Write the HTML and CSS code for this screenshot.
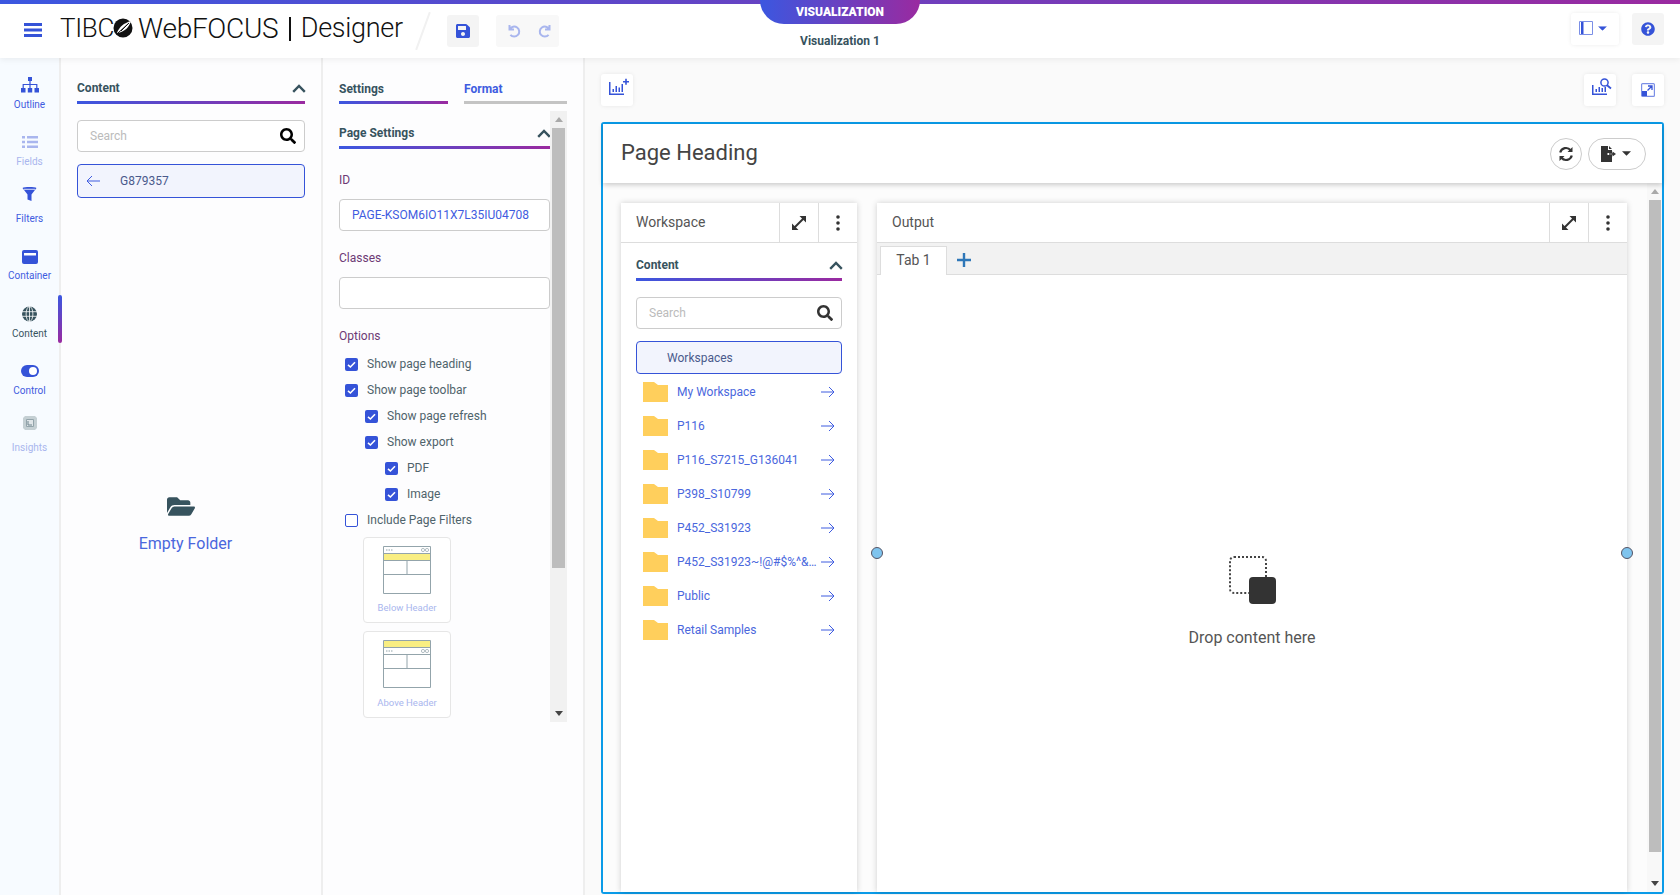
FILE: index.html
```html
<!DOCTYPE html>
<html lang="en">
<head>
  <meta charset="UTF-8" />
  <title>WebFOCUS Designer</title>
  <link rel="stylesheet" href="styles.css">
</head>
<body>
  <svg class="defs" width="0" height="0">
    <symbol id="i-search" viewBox="0 0 512 512"><path d="M505 442.7L405.3 343c-4.5-4.5-10.6-7-17-7H372c27.6-35.3 44-79.7 44-128C416 93.1 322.9 0 208 0S0 93.1 0 208s93.1 208 208 208c48.3 0 92.7-16.4 128-44v16.3c0 6.4 2.5 12.5 7 17l99.7 99.7c9.4 9.4 24.6 9.4 33.9 0l28.3-28.3c9.4-9.4 9.4-24.6.1-34zM208 336c-70.7 0-128-57.2-128-128 0-70.7 57.2-128 128-128 70.7 0 128 57.2 128 128 0 70.7-57.2 128-128 128z"/></symbol>
    <symbol id="i-chevron" viewBox="0 0 14 9"><path d="M1.200 7.800 7 2l5.800 5.800" fill="none" stroke="currentColor" stroke-width="2.400"/></symbol>
    <symbol id="i-folder" viewBox="0 0 25 20"><path d="M0 0h11l4 3h10v17H0z" fill="#ffcf5c"/></symbol>
    <symbol id="i-arrow" viewBox="0 0 14 12"><path d="M0 6h13M8 1l5 5-5 5" fill="none" stroke="currentColor" stroke-width="1"/></symbol>
    <symbol id="i-check" viewBox="0 0 13 13"><path d="M3 6.800 5.400 9 10 4.200" fill="none" stroke="#fff" stroke-width="1.600"/></symbol>
    <symbol id="i-expand" viewBox="0 0 16 16"><path d="M3 13 13 3" stroke="currentColor" stroke-width="2" fill="none"/><path d="M8.500 1H15v6.500zM1 8.500 7.500 15H1z" fill="currentColor"/></symbol>
    <symbol id="i-dots" viewBox="0 0 4 16"><circle cx="2" cy="2" r="1.800"/><circle cx="2" cy="8" r="1.800"/><circle cx="2" cy="14" r="1.800"/></symbol>
    <symbol id="i-caret" viewBox="0 0 10 5"><path d="M0 0h10L5 5z"/></symbol>
  </svg>

  <header class="topbar">
    <div class="top-left">
      <svg class="burger" viewBox="0 0 18 14" width="18" height="14"><path d="M0 0h18v3H0zM0 5.500h18v3H0zM0 11h18v3H0z"/></svg>
      <div class="logo">
        <span>TIBC</span>
        <svg class="logo-ball" viewBox="0 0 20 20" width="20" height="20"><circle cx="10" cy="10" r="9.500" fill="#111"/><path d="M4 15C6 9 11 5 18 3c-2 6-6 11-14 12z" fill="#fff"/><path d="M5 15 16 5M8 13l7-7" stroke="#111" stroke-width="1"/></svg>
        <span class="logo-wf">WebFOCUS</span>
        <i class="logo-bar"></i>
        <span class="logo-des">Designer</span>
      </div>
      <i class="slash"></i>
      <button class="tool tool-grey">
        <svg viewBox="0 0 448 512" width="14" height="16" fill="#3553d8"><path d="M433.941 129.941l-83.882-83.882A48 48 0 0 0 316.118 32H48C21.49 32 0 53.49 0 80v352c0 26.51 21.49 48 48 48h352c26.51 0 48-21.49 48-48V163.882a48 48 0 0 0-14.059-33.941zM224 416c-35.346 0-64-28.654-64-64 0-35.346 28.654-64 64-64s64 28.654 64 64c0 35.346-28.654 64-64 64zm96-304.52V212c0 6.627-5.373 12-12 12H76c-6.627 0-12-5.373-12-12V108c0-6.627 5.373-12 12-12h228.52c3.183 0 6.235 1.264 8.485 3.515l3.48 3.48A11.996 11.996 0 0 1 320 111.48z"/></svg>
      </button>
      <div class="undo-group">
        <svg viewBox="0 0 14 14" width="14" height="14"><path d="M2.500 1v4.500H7M2.800 5.200a5 5 0 1 1 .6 5.600" fill="none" stroke="#a9b6ee" stroke-width="2"/></svg>
        <svg viewBox="0 0 14 14" width="14" height="14"><path d="M11.500 1v4.500H7M11.200 5.200a5 5 0 1 0-.6 5.600" fill="none" stroke="#a9b6ee" stroke-width="2"/></svg>
      </div>
    </div>
    <div class="top-center">
      <div class="mode-tab">VISUALIZATION</div>
      <div class="doc-name">Visualization 1</div>
    </div>
    <div class="top-right">
      <button class="tool tool-wide">
        <svg viewBox="0 0 14 14" width="14" height="14"><path d="M.5.500h13v13H.5z" fill="none" stroke="#7b8fe6"/><path d="M2 1h2.500v12H2z" fill="#3553d8"/></svg>
        <svg viewBox="0 0 10 5" width="9" height="5" fill="#3553d8"><use href="#i-caret"/></svg>
      </button>
      <button class="tool tool-grey">
        <svg viewBox="0 0 512 512" width="14" height="14" fill="#3553d8"><path d="M504 256c0 136.997-111.043 248-248 248S8 392.997 8 256C8 119.083 119.043 8 256 8s248 111.083 248 248zM262.655 90c-54.497 0-89.255 22.957-116.549 63.758-3.536 5.286-2.353 12.415 2.715 16.258l34.699 26.31c5.205 3.947 12.621 3.008 16.665-2.122 17.864-22.658 30.113-35.797 57.303-35.797 20.429 0 45.698 13.148 45.698 32.958 0 14.976-12.363 22.667-32.534 33.976C247.128 238.528 216 254.941 216 296v4c0 6.627 5.373 12 12 12h56c6.627 0 12-5.373 12-12v-1.333c0-28.462 83.186-29.647 83.186-106.667 0-58.002-60.165-102-116.531-102zM256 338c-25.365 0-46 20.635-46 46 0 25.364 20.635 46 46 46s46-20.636 46-46c0-25.365-20.635-46-46-46z"/></svg>
      </button>
    </div>
  </header>

  <div class="app">
    <nav class="rail">
      <a class="rail-item">
        <svg viewBox="0 0 18 16" width="18" height="16" fill="#3553d8"><path d="M7 0h4v4H7zM0 11h4.500v4.500H0zM6.800 11h4.400v4.500H6.800zM13.500 11H18v4.500h-4.500z"/><path d="M2.200 11V7.500h13.600V11M9 4v7" fill="none" stroke="#3553d8" stroke-width="1.200"/></svg>
        <span>Outline</span>
      </a>
      <a class="rail-item is-off">
        <svg viewBox="0 0 16 14" width="16" height="14" fill="#a9b6ee"><path d="M0 1h3v2.400H0zM5 1h11v2.400H5zM0 5.800h3v2.400H0zM5 5.800h11v2.400H5zM0 10.600h3V13H0zM5 10.600h11V13H5z"/></svg>
        <span>Fields</span>
      </a>
      <a class="rail-item icon-high">
        <svg viewBox="0 0 15 15" width="15" height="15" fill="#3553d8"><path d="M.5 1.500C2 .3 13 .3 14.500 1.500L9.500 8v6.500l-4-1.500V8z"/><path d="M2 2.800h11" stroke="#fff" stroke-width=".8"/></svg>
        <span>Filters</span>
      </a>
      <a class="rail-item">
        <svg viewBox="0 0 16 14" width="16" height="14"><rect width="16" height="14" rx="2" fill="#3553d8"/><path d="M2 3h12v2.500H2z" fill="#fff"/></svg>
        <span>Container</span>
      </a>
      <a class="rail-item is-on">
        <svg viewBox="0 0 15 15" width="15" height="15"><circle cx="7.500" cy="7.500" r="7.500" fill="#37535e"/><path d="M0 5.200h15M0 9.800h15M7.500 0v15" stroke="#fff" stroke-width=".8"/><ellipse cx="7.500" cy="7.500" rx="3.400" ry="7.500" fill="none" stroke="#fff" stroke-width=".8"/></svg>
        <span>Content</span>
      </a>
      <a class="rail-item">
        <svg viewBox="0 0 18 12" width="18" height="12"><rect width="18" height="12" rx="6" fill="#3553d8"/><circle cx="12" cy="6" r="4" fill="#fff"/></svg>
        <span>Control</span>
      </a>
      <a class="rail-item is-off icon-high">
        <svg viewBox="0 0 14 14" width="14" height="14"><path d="M2 0h10l2 2v10l-2 2H2l-2-2V2z" fill="#c4cfd3"/><path d="M3.500 3.500h7v7h-7z" fill="#dfe5e8" stroke="#93a4ab"/><path d="M5 5v4h4" fill="none" stroke="#6f858e"/></svg>
        <span>Insights</span>
      </a>
    </nav>

    <section class="panel panel-content">
      <div class="sect-head"><b>Content</b><svg class="chev" width="14" height="9"><use href="#i-chevron"/></svg></div>
      <div class="search">
        <span>Search</span>
        <svg width="16" height="16"><use href="#i-search"/></svg>
      </div>
      <div class="selected sel-back">
        <svg class="back" width="14" height="12"><use href="#i-arrow"/></svg>
        <span>G879357</span>
      </div>
      <div class="empty">
        <svg viewBox="0 0 576 512" width="28" height="25" fill="#37535e"><path d="M572.694 292.093L500.27 416.248A63.997 63.997 0 0 1 444.989 448H45.025c-18.523 0-30.064-20.093-20.731-36.093l72.424-124.155A64 64 0 0 1 152 256h399.964c18.523 0 30.064 20.093 20.73 36.093zM152 224h328v-48c0-26.51-21.49-48-48-48H272l-64-64H48C21.49 64 0 85.49 0 112v278.046l69.077-118.418C86.214 242.25 117.989 224 152 224z"/></svg>
        <p>Empty Folder</p>
      </div>
    </section>

    <section class="panel panel-settings">
      <div class="tabs">
        <div class="tab tab-on">Settings</div>
        <div class="tab tab-off">Format</div>
      </div>
      <div class="scroller">
        <div class="scroll-body">
          <div class="sect-head"><b>Page Settings</b><svg class="chev" width="14" height="9"><use href="#i-chevron"/></svg></div>
          <label class="fld-label lbl-first">ID</label>
          <div class="input input-val">PAGE-KSOM6IO11X7L35IU04708</div>
          <label class="fld-label">Classes</label>
          <div class="input"></div>
          <label class="fld-label">Options</label>
          <ul class="checks">
            <li><i class="box on"><svg width="13" height="13"><use href="#i-check"/></svg></i>Show page heading</li>
            <li><i class="box on"><svg width="13" height="13"><use href="#i-check"/></svg></i>Show page toolbar</li>
            <li class="lvl2"><i class="box on"><svg width="13" height="13"><use href="#i-check"/></svg></i>Show page refresh</li>
            <li class="lvl2"><i class="box on"><svg width="13" height="13"><use href="#i-check"/></svg></i>Show export</li>
            <li class="lvl3"><i class="box on"><svg width="13" height="13"><use href="#i-check"/></svg></i>PDF</li>
            <li class="lvl3"><i class="box on"><svg width="13" height="13"><use href="#i-check"/></svg></i>Image</li>
            <li><i class="box"></i>Include Page Filters</li>
          </ul>
          <div class="thumb">
            <svg viewBox="0 0 48 48" width="48" height="48">
              <path d="M.5.500h47v47H.5z" fill="#fff" stroke="#93a4ab"/>
              <path d="M1 7.500h46v7H1z" fill="#f9ee82"/>
              <path d="M1 7.500h46M1 14.500h46M24 14.500v14M1 28.500h46" stroke="#93a4ab" fill="none"/>
              <path d="M3 4h1.500M5.500 4H7M8 4h1.500" stroke="#93a4ab"/>
              <circle cx="40" cy="4" r="1.600" fill="none" stroke="#93a4ab" stroke-width=".7"/><circle cx="44" cy="4" r="1.600" fill="none" stroke="#93a4ab" stroke-width=".7"/>
            </svg>
            <span>Below Header</span>
          </div>
          <div class="thumb thumb-last">
            <svg viewBox="0 0 48 48" width="48" height="48">
              <path d="M.5.500h47v47H.5z" fill="#fff" stroke="#93a4ab"/>
              <path d="M1 1h46v6.500H1z" fill="#f9ee82"/>
              <path d="M1 7.500h46M1 14.500h46M24 14.500v14M1 28.500h46" stroke="#93a4ab" fill="none"/>
              <path d="M3 11h1.500M5.500 11H7M8 11h1.500" stroke="#93a4ab"/>
              <circle cx="40" cy="11" r="1.600" fill="none" stroke="#93a4ab" stroke-width=".7"/><circle cx="44" cy="11" r="1.600" fill="none" stroke="#93a4ab" stroke-width=".7"/>
            </svg>
            <span>Above Header</span>
          </div>
        </div>
        <div class="sbar sbar-side">
          <i class="sb-up"></i>
          <i class="sb-thumb"></i>
          <i class="sb-down"></i>
        </div>
      </div>
    </section>

    <main class="stage">
      <div class="stage-tools">
        <button class="tool tool-white tool-lift">
          <svg viewBox="0 0 20 18" width="20" height="18" fill="#3553d8"><path d="M0 4h1.500v11.500H15V17H0z"/><path d="M3.500 11H5v3H3.500zM6.500 8H8v6H6.500zM9.500 9.500H11V14H9.500zM12.500 6H14v8h-1.500z"/><path d="M14 3h6v1.600h-6zM16.200.800h1.600v6h-1.600z"/></svg>
        </button>
        <div class="tools-right">
          <button class="tool tool-white tool-lift">
            <svg viewBox="0 0 20 18" width="20" height="18" fill="#3553d8"><path d="M0 7h1.500v8.500H15V17H0z"/><path d="M3.500 11H5v3H3.500zM6.500 9H8v5H6.500zM9.500 10H11v4H9.500zM12.500 9H14v5h-1.500z"/><circle cx="12.500" cy="4.500" r="3.600" fill="none" stroke="#3553d8" stroke-width="1.500"/><path d="m15 7.200 4 3.300" stroke="#3553d8" stroke-width="1.800"/></svg>
          </button>
          <button class="tool tool-white">
            <svg viewBox="0 0 14 14" width="14" height="14"><rect x=".6" y=".6" width="12.800" height="12.800" rx="1" fill="none" stroke="#7b8fe6" stroke-width="1.200"/><path d="M1 8h5v5H1z" fill="#3553d8"/><path d="m6.500 7.500 4-4M7 3h4v4" fill="none" stroke="#3553d8" stroke-width="1.300"/></svg>
          </button>
        </div>
      </div>

      <div class="canvas">
        <div class="page-head">
          <h1>Page Heading</h1>
          <div class="page-actions">
            <button class="round">
              <svg viewBox="0 0 16 16" width="16" height="16"><path d="M2.200 6.500A6 6 0 0 1 12.600 4.200M13.800 9.500A6 6 0 0 1 3.400 11.800" fill="none" stroke="#333" stroke-width="2.200"/><path d="M14.500 1v5h-5zM1.500 15v-5h5z" fill="#333"/></svg>
            </button>
            <button class="round pill">
              <svg viewBox="0 0 16 16" width="16" height="16" fill="#333"><path d="M1 0h7v4h4v3H7.500v2H12v7H1zM9 0l3 3H9z"/><path d="M9 7.200h3.500V5.500L16 8l-3.500 2.500V8.800H9z"/></svg>
              <svg width="9" height="5" fill="#333"><use href="#i-caret"/></svg>
            </button>
          </div>
        </div>
        <div class="page-body">
          <article class="card card-ws">
            <div class="card-head">
              <span class="card-title">Workspace</span>
              <button class="card-btn"><svg width="16" height="16"><use href="#i-expand"/></svg></button>
              <button class="card-btn"><svg width="4" height="16" fill="#333"><use href="#i-dots"/></svg></button>
            </div>
            <div class="ws-body">
              <div class="sect-head"><b>Content</b><svg class="chev" width="14" height="9"><use href="#i-chevron"/></svg></div>
              <div class="search">
                <span>Search</span>
                <svg width="16" height="16" fill="#333"><use href="#i-search"/></svg>
              </div>
              <div class="selected sel-ws"><span>Workspaces</span></div>
              <ul class="files">
                <li><svg width="25" height="20"><use href="#i-folder"/></svg><span>My Workspace</span><svg class="go" width="14" height="12"><use href="#i-arrow"/></svg></li>
                <li><svg width="25" height="20"><use href="#i-folder"/></svg><span>P116</span><svg class="go" width="14" height="12"><use href="#i-arrow"/></svg></li>
                <li><svg width="25" height="20"><use href="#i-folder"/></svg><span>P116_S7215_G136041</span><svg class="go" width="14" height="12"><use href="#i-arrow"/></svg></li>
                <li><svg width="25" height="20"><use href="#i-folder"/></svg><span>P398_S10799</span><svg class="go" width="14" height="12"><use href="#i-arrow"/></svg></li>
                <li><svg width="25" height="20"><use href="#i-folder"/></svg><span>P452_S31923</span><svg class="go" width="14" height="12"><use href="#i-arrow"/></svg></li>
                <li><svg width="25" height="20"><use href="#i-folder"/></svg><span>P452_S31923~!@#$%^&amp;…</span><svg class="go" width="14" height="12"><use href="#i-arrow"/></svg></li>
                <li><svg width="25" height="20"><use href="#i-folder"/></svg><span>Public</span><svg class="go" width="14" height="12"><use href="#i-arrow"/></svg></li>
                <li><svg width="25" height="20"><use href="#i-folder"/></svg><span>Retail Samples</span><svg class="go" width="14" height="12"><use href="#i-arrow"/></svg></li>
              </ul>
            </div>
          </article>

          <article class="card card-out">
            <i class="handle handle-l"></i>
            <i class="handle handle-r"></i>
            <div class="card-head">
              <span class="card-title">Output</span>
              <button class="card-btn"><svg width="16" height="16"><use href="#i-expand"/></svg></button>
              <button class="card-btn"><svg width="4" height="16" fill="#333"><use href="#i-dots"/></svg></button>
            </div>
            <div class="out-tabs">
              <div class="out-tab">Tab 1</div>
              <svg viewBox="0 0 14 14" width="14" height="14"><path d="M7 0v14M0 7h14" stroke="#2f77b8" stroke-width="2.400"/></svg>
            </div>
            <div class="drop">
              <div class="drop-icon"><i class="drop-dash"></i><i class="drop-solid"></i></div>
              <p>Drop content here</p>
            </div>
          </article>

          <div class="sbar sbar-page">
            <i class="sb-up"></i>
            <i class="sb-thumb"></i>
            <i class="sb-down"></i>
          </div>
        </div>
      </div>
    </main>
  </div>
</body>
</html>
```

FILE: styles.css
```css
* {
  box-sizing: border-box;
}

html, body {
  margin: 0;
  height: 895px;
  overflow: hidden;
}

body {
  display: flex;
  flex-direction: column;
  font-family: Roboto, "Liberation Sans", sans-serif;
  font-size: 12px;
  color: #37535e;
  background: #fff;
}

.defs {
  position: absolute;
}

button {
  padding: 0;
  border: none;
  background: none;
  font: inherit;
}

ul {
  list-style: none;
  margin: 0;
  padding: 0;
}

/* top bar */
.topbar {
  position: relative;
  z-index: 3;
  flex: none;
  height: 58px;
  display: grid;
  grid-template-columns: 1fr auto 1fr;
  border-top: 4px solid;
  border-image: linear-gradient(90deg, #3b57e0, #9a2aa0) 1;
  background: #fff;
  box-shadow: 0 2px 6px rgba(0, 0, 0, .06);
}

.top-left {
  display: flex;
  align-items: center;
  padding-left: 24px;
  padding-bottom: 5px;
}

.burger {
  fill: #3553d8;
  margin-top: 2px;
}

.logo {
  display: flex;
  align-items: center;
  margin: -1px 0 0 18px;
  font-size: 26px;
  font-weight: 300;
  color: #111;
  letter-spacing: -.3px;
}

.logo-ball {
  margin: 0 5px 0 -1px;
}

.logo-wf {
  font-size: 28px;
}

.logo-des {
  font-size: 27px;
}

.logo-bar {
  width: 1.5px;
  height: 24px;
  margin: 2px 10px 0 11px;
  background: #111;
}

.slash {
  width: 2px;
  height: 40px;
  margin: 4px 0 0 19px;
  background: #f1f1f1;
  transform: rotate(20deg);
}

.tool {
  display: flex;
  align-items: center;
  justify-content: center;
  width: 32px;
  height: 32px;
  border-radius: 3px;
}

.tool-grey {
  background: #f4f4f4;
}

.top-left .tool {
  margin: 5px 0 0 23px;
}

.undo-group {
  display: flex;
  align-items: center;
  justify-content: space-between;
  width: 63px;
  height: 32px;
  margin: 5px 0 0 17px;
  padding: 0 7px 0 11px;
  border-radius: 3px;
  background: #f8f8f8;
}

.top-center {
  width: 160px;
  margin-top: -4px;
  text-align: center;
}

.mode-tab {
  height: 24px;
  line-height: 24px;
  border-radius: 0 0 24px 24px;
  background: linear-gradient(90deg, #3b57e0, #9a2aa0);
  color: #fff;
  font-weight: 900;
  font-size: 12px;
}

.doc-name {
  margin-top: 9px;
  line-height: 16px;
  font-weight: 700;
}

.top-right {
  display: flex;
  justify-content: flex-end;
  gap: 13px;
  padding: 9px 16px 0 0;
}

.tool-wide {
  width: 48px;
  gap: 5px;
  padding: 0 4px 2px 0;
  box-shadow: 0 0 4px rgba(0, 0, 0, .08);
}

.tool-white {
  background: #fff;
  box-shadow: 0 0 4px rgba(0, 0, 0, .08);
}

.tool-lift svg {
  margin: 0 0 7px 3px;
}

/* app columns */
.app {
  flex: 1;
  min-height: 0;
  display: flex;
}

.rail {
  flex: none;
  width: 61px;
  padding-top: 16px;
  border-right: 2px solid #eee;
  background: #f7fbff;
}

.rail-item {
  position: relative;
  display: flex;
  flex-direction: column;
  align-items: center;
  height: 57.3px;
  font-size: 10px;
  color: #3f5ce0;
}

.rail-item svg {
  flex: none;
  margin-top: 2px;
  height: 18px;
}

.rail-item span {
  margin-top: 4.5px;
  line-height: 12px;
}

.icon-high svg {
  margin-top: -4px;
  margin-bottom: 6px;
}

.is-off {
  color: #a9b6ee;
}

.is-on {
  color: #37535e;
}

.is-on::after {
  content: "";
  position: absolute;
  right: -3px;
  top: -8px;
  width: 4px;
  height: 48px;
  border-radius: 2px;
  background: linear-gradient(180deg, #3b57e0, #9a2aa0);
}

.panel {
  flex: none;
  border-right: 2px solid #eee;
  background: #fdfdfe;
}

.panel-content {
  width: 262px;
  padding: 20px 16px 0 16px;
}

.panel-settings {
  width: 262px;
  padding: 22px 15px 0 16px;
}

.sect-head {
  display: flex;
  align-items: center;
  justify-content: space-between;
  height: 26px;
  padding-bottom: 6px;
  background: linear-gradient(90deg, #3b57e0, #9a2aa0) bottom / 100% 3px no-repeat;
  color: #37535e;
}

.chev {
  color: #37535e;
  margin-right: -1px;
}

.search {
  display: flex;
  align-items: center;
  justify-content: space-between;
  height: 32px;
  margin-top: 16px;
  padding: 0 8px 0 12px;
  border: 1px solid #ccc;
  border-radius: 4px;
  background: #fff;
  color: #bbb;
}

.selected {
  display: flex;
  align-items: center;
  margin-top: 12px;
  border: 1px solid #3553d8;
  border-radius: 4px;
  background: #f2f4fd;
  color: #4a5a8c;
}

.sel-back {
  height: 34px;
  padding-left: 8px;
}

.back {
  color: #3f5ce0;
  transform: scaleX(-1);
  margin-right: 20px;
}

.empty {
  margin-top: 296px;
  padding-right: 11px;
  text-align: center;
}

.empty svg {
  margin-right: 10px;
}

.empty p {
  margin: 12px 0 0;
  font-size: 16px;
  line-height: 20px;
  color: #4a67dd;
}

/* settings column */
.tabs {
  display: flex;
  gap: 16px;
}

.tab {
  height: 24px;
  padding-top: 2px;
  font-weight: 700;
  background: linear-gradient(90deg, #3b57e0, #9a2aa0) bottom / 100% 3px no-repeat;
}

.tab-on {
  width: 109px;
}

.tab-off {
  width: 103px;
  color: #3f5ce0;
  background: linear-gradient(#c4c4c4, #c4c4c4) bottom / 100% 3px no-repeat;
}

.scroller {
  display: flex;
  height: 611px;
  margin-top: 7px;
}

.scroll-body {
  width: 211px;
  padding-top: 12px;
  overflow: hidden;
}

.fld-label {
  display: block;
  margin-top: 19px;
  line-height: 16px;
  color: #6d3a75;
}

.lbl-first {
  margin-top: 23px;
}

.input {
  height: 32px;
  margin-top: 11px;
  padding-left: 12px;
  line-height: 30px;
  border: 1px solid #ccc;
  border-radius: 4px;
  background: #fff;
}

.input-val {
  color: #3f5ce0;
}

.checks {
  margin-top: 7px;
}

.checks li {
  display: flex;
  align-items: center;
  gap: 9px;
  height: 26px;
  padding-left: 6px;
  color: #4f636b;
}

.checks .lvl2 {
  padding-left: 26px;
}

.checks .lvl3 {
  padding-left: 46px;
}

.box {
  flex: none;
  width: 13px;
  height: 13px;
  border: 1px solid #3553d8;
  border-radius: 2px;
  background: #fff;
}

.box.on {
  border: none;
  background: #3553d8;
}

.box svg {
  display: block;
}

.thumb {
  display: flex;
  flex-direction: column;
  align-items: center;
  width: 88px;
  height: 86px;
  margin: 8px 0 0 24px;
  padding-top: 8px;
  border: 1px solid #e6e6e6;
  border-radius: 4px;
  background: #fff;
  font-size: 9.5px;
  color: #a9b6ee;
}

.checks + .thumb {
  margin-top: 4px;
}

.thumb span {
  margin-top: 8px;
}

.thumb-last {
  height: 87px;
}

.thumb-last span {
  margin-top: 9px;
}

.sbar {
  position: relative;
  flex: none;
  display: flex;
  flex-direction: column;
  align-items: center;
  background: #f1f1f1;
}

.sbar-side {
  width: 17px;
  height: 100%;
  padding-top: 17px;
}

.sb-thumb {
  width: 13px;
  height: 440px;
  background: #bdbdbd;
}

.sb-up, .sb-down {
  position: absolute;
  left: 50%;
  margin-left: -4px;
  border-left: 4px solid transparent;
  border-right: 4px solid transparent;
}

.sb-up {
  top: 6px;
  border-bottom: 5px solid #a9a9a9;
}

.sb-down {
  bottom: 6px;
  border-top: 5px solid #444;
}

/* stage */
.stage {
  flex: 1;
  min-width: 0;
  display: flex;
  flex-direction: column;
  padding: 16px 16px 1px 16px;
  background: #fafafa;
}

.stage-tools {
  flex: none;
  display: flex;
  justify-content: space-between;
}

.tools-right {
  display: flex;
  gap: 16px;
}

.canvas {
  flex: 1;
  min-height: 0;
  display: flex;
  flex-direction: column;
  margin-top: 16px;
  border: 2px solid #0a9be8;
  border-radius: 3px;
  background: #fff;
}

.page-head {
  position: relative;
  z-index: 1;
  flex: none;
  display: flex;
  align-items: center;
  justify-content: space-between;
  height: 59px;
  padding: 0 16px 0 18px;
  background: #fff;
  box-shadow: 0 2px 5px rgba(0, 0, 0, .2);
}

.page-head h1 {
  margin: -2px 0 0;
  font-size: 22px;
  font-weight: 400;
  color: #444;
}

.page-actions {
  display: flex;
  gap: 6px;
}

.round {
  display: flex;
  align-items: center;
  justify-content: center;
  width: 32px;
  height: 32px;
  border: 1px solid #ccc;
  border-radius: 16px;
  background: #fff;
}

.pill {
  width: 58px;
  gap: 6px;
  padding-right: 4px;
}

.page-body {
  flex: 1;
  min-height: 0;
  display: flex;
  padding: 20px 0 0 18px;
  background: #fcfcfc;
}

.card {
  position: relative;
  display: flex;
  flex-direction: column;
  background: #fff;
  box-shadow: 0 0 6px rgba(0, 0, 0, .18);
}

.card-ws {
  width: 236px;
  margin-right: 20px;
}

.card-out {
  width: 750px;
  margin-right: 20px;
}

.card-head {
  flex: none;
  display: flex;
  align-items: center;
  height: 40px;
  border-bottom: 1px solid #ddd;
}

.card-title {
  flex: 1;
  margin-top: -2px;
  padding-left: 15px;
  font-size: 14px;
  color: #555;
}

.card-btn {
  display: flex;
  align-items: center;
  justify-content: center;
  width: 39px;
  height: 39px;
  border-left: 1px solid #ddd;
  color: #333;
}

.ws-body {
  padding: 12px 15px 0;
}

.ws-body .selected {
  height: 33px;
  margin-top: 12px;
  padding-left: 30px;
}

.ws-body .search {
  height: 32px;
}

.files {
  padding-top: 1px;
}

.files li {
  display: flex;
  align-items: center;
  height: 34px;
  padding: 0 7px 0 7px;
  color: #4a67dd;
}

.files span {
  flex: 1;
  min-width: 0;
  margin: 0 3px 0 9px;
  white-space: nowrap;
}

.go {
  flex: none;
  color: #3f5ce0;
}

.out-tabs {
  flex: none;
  display: flex;
  align-items: flex-end;
  height: 32px;
  padding-left: 3px;
  border-bottom: 1px solid #ddd;
  background: #f2f2f2;
}

.out-tabs svg {
  margin: 0 0 7px 10px;
}

.out-tab {
  width: 67px;
  height: 29px;
  margin-bottom: -1px;
  border: 1px solid #ddd;
  border-bottom: none;
  background: #fff;
  font-size: 14px;
  line-height: 26px;
  text-align: center;
  color: #555;
}

.drop {
  display: flex;
  flex-direction: column;
  align-items: center;
  padding-top: 281px;
}

.drop-icon {
  display: grid;
  grid-template-columns: 20px 27px;
  grid-template-rows: 21px 27px;
  width: 47px;
  height: 48px;
}

.drop-dash {
  grid-area: 1 / 1 / 3 / 3;
  width: 38px;
  height: 38px;
  border: 2px dotted #444;
  border-radius: 5px;
}

.drop-solid {
  grid-area: 2 / 2;
  z-index: 1;
  border-radius: 4px;
  background: #333;
}

.drop p {
  margin: 25px 0 0;
  font-size: 16px;
  line-height: 18px;
  color: #555;
}

.handle {
  position: absolute;
  z-index: 2;
  top: 344px;
  width: 12px;
  height: 12px;
  border: 1.500px solid #556;
  border-radius: 50%;
  background: #7fc4ee;
}

.handle-l {
  left: -6px;
}

.handle-r {
  right: -6px;
}

.sbar-page {
  width: 15px;
  margin: -20px 0 0;
  padding-top: 17px;
  background: #f8f8f8;
}

.sbar-page .sb-thumb {
  width: 12px;
  height: 652px;
}
```
